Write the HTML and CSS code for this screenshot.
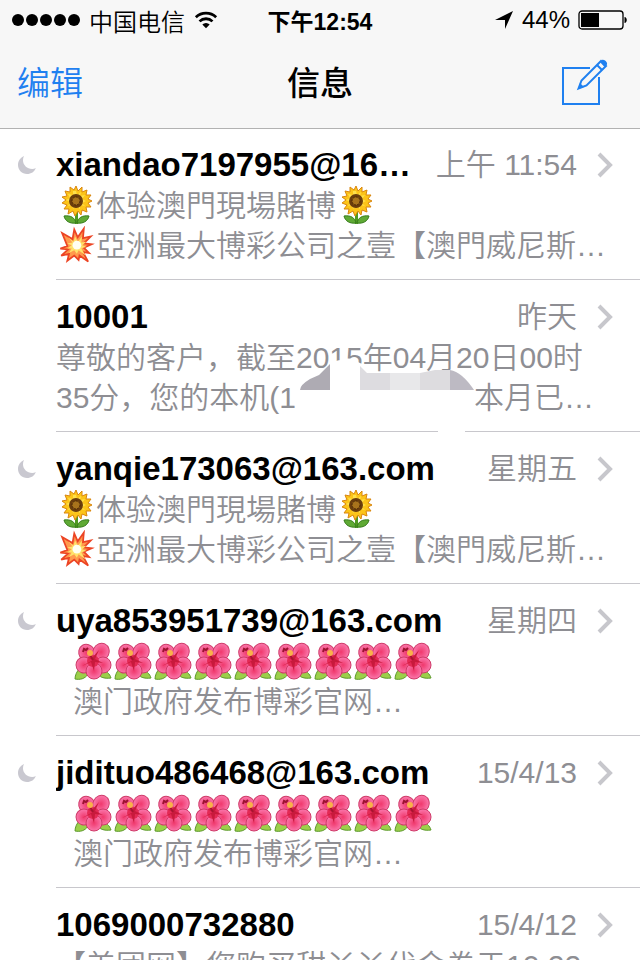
FILE: index.html
```html
<!DOCTYPE html>
<html lang="zh-CN">
<head>
    <meta charset="utf-8">
    <title>信息</title>
    <link rel="stylesheet" href="styles.css">
</head>
<body>

<svg class="defs" aria-hidden="true">
    <radialGradient id="petal">
        <stop offset="0" stop-color="#f0386c"/>
        <stop offset="1" stop-color="#fa78ac"/>
    </radialGradient>
    <symbol id="moon" viewBox="0 0 18 18">
        <path d="M6 0C2.500 1.500 0 5 0 9c0 5 4 9 9 9 4.200 0 7.600-2.300 8.800-6-1 .6-2.300.9-3.600.9C9.100 12.900 5 9 5 4.200 5 2.600 5.300 1.200 6 0z" fill="#c9c8d0"/>
    </symbol>
    <symbol id="chevron" viewBox="0 0 16 26">
        <path d="M2 2l11 11L2 24" fill="none" stroke="#c7c7cc" stroke-width="4"/>
    </symbol>
    <symbol id="sunflower" viewBox="0 0 40 40">
        <path d="M19 26h3v12h-3z" fill="#4f9a22"/>
        <path d="M20 37c-1-5-5-8-12-7 1 5 6 8 12 7zM21 37c1-5 5-8 12-7-1 5-6 8-12 7z" fill="#5faa35" stroke="#357a1b"/>
        <path d="M20 0l2 5 4-4 0 5 5-2-1 5 5 0-3 4 4 2-4 2 3 4-5 0 1 5-5-2-1 5-3-4-3 5-2-5-5 3 1-5-5 0 3-4-5-2 4-3-4-3 5-1-2-5 5 1 0-5 4 3z" fill="#fcc419" stroke="#d9860f"/>
        <path d="M20 5l1 4 4-3-1 4 5-1-3 4 4 2-4 2 3 3-5-1 0 4-4-3-3 3-1-4-4 1 2-4-4-2 4-2-2-4 5 1 0-4z" fill="#ffe04a"/>
        <circle cx="20" cy="15" r="7" fill="#6b3d0c"/>
        <circle cx="20" cy="15" r="4" fill="#a8731c" stroke="#4a2707" stroke-dasharray="2 1"/>
    </symbol>
    <symbol id="boom" viewBox="-3 -1 46 46">
        <path d="M4 7l12 7 2-11 4 9 7-10-1 11 9-2-8 8 9 1-9 4 6 6-7-1 6 11-10-7-1 5-5-5-8 6 2-8-9 2 8-7-9-1 8-3z" fill="#ff9a4d" stroke="#ec4424" stroke-width="2"/>
        <path d="M11 12l6 5 2-6 3 6 5-6-1 7 6-1-5 4 5 2-6 2 5 8-8-6-2 4-3-4-6 3 3-5-5 0 5-4-5-2 6-1z" fill="#ffe26a"/>
        <circle cx="21" cy="21" r="5" fill="#fffef0"/>
    </symbol>
    <symbol id="hibiscus" viewBox="0 0 40 40">
        <path d="M7 26c-3 3-5 7-5 11 5 1 10 0 13-5zM24 31c2 4 7 6 14 5-1-4-5-8-10-8z" fill="#9ccf4a" stroke="#5d9a2c"/>
        <g fill="url(#petal)" stroke="#cf3a68">
            <ellipse cx="14" cy="11" rx="8" ry="9" transform="rotate(-30 14 11)"/>
            <ellipse cx="28" cy="10" rx="8" ry="9" transform="rotate(25 28 10)"/>
            <ellipse cx="11" cy="23" rx="8" ry="8" transform="rotate(-25 11 23)"/>
            <ellipse cx="30" cy="23" rx="8" ry="8"/>
            <ellipse cx="21" cy="29" rx="8" ry="8"/>
        </g>
        <circle cx="20" cy="19" r="6" fill="#e42a55"/>
        <path d="M20 18l-6-3 5 1 7-8-4 9 8 4-8-1-1 9-3-9-9 4z" fill="#c81a3c"/>
        <path d="M20 18l-4-7" stroke="#a81530" stroke-width="2"/>
        <circle cx="17" cy="11" r="3" fill="#f9b04a"/>
        <path d="M10 10l1-3 2 1 2-2" fill="none" stroke="#9c1230" stroke-width="2"/>
    </symbol>
</svg>

<div class="screen">
    <header class="header">
        <div class="status">
            <div class="status-left">
                <svg class="signal" width="68" height="12" viewBox="0 0 68 12"><circle cx="6" cy="6" r="6"/><circle cx="20" cy="6" r="6"/><circle cx="34" cy="6" r="6"/><circle cx="48" cy="6" r="6"/><circle cx="62" cy="6" r="6"/></svg>
                <span>中国电信</span>
                <svg width="24" height="20" viewBox="0 0 26 20">
                    <path d="M2 7a16 16 0 0 1 22 0M6 11.500a10 10 0 0 1 14 0" fill="none" stroke="#000" stroke-width="3"/>
                    <path d="M13 19l-4-4a5.500 5.500 0 0 1 8 0z"/>
                </svg>
            </div>
            <div class="clock">下午12:54</div>
            <div class="status-right">
                <svg width="20" height="20" viewBox="0 0 20 20"><path d="M19 1L11 19v-9H1z"/></svg>
                <span>44%</span>
                <svg width="50" height="20" viewBox="0 0 50 20">
                    <rect x="1" y="1" width="44" height="18" rx="3" fill="none" stroke="#000" stroke-width="1.300"/>
                    <path d="M3 3h18v14H3zM46.500 7c3 0 3 6 0 6z"/>
                </svg>
            </div>
        </div>
        <div class="navbar">
            <button type="button" class="nav-button">编辑</button>
            <h1>信息</h1>
            <button type="button" class="nav-button compose" aria-label="新信息">
                <svg width="48" height="48" viewBox="0 0 48 48">
                    <g fill="none" stroke="#1f80f0" stroke-width="2">
                        <path d="M30 10H3v36h36V19"/>
                        <path d="M18.500 30.500l3-8L41 3l5 5-19.500 19.500z" fill="#f7f7f7"/>
                        <path d="M37 7l5 5"/>
                    </g>
                    <path d="M40 4l2-2c2-1.500 6 2.500 5 4.500l-2.500 2.500zM18 31l2-6 4 4z" fill="#1f80f0"/>
                </svg>
            </button>
        </div>
    </header>

    <main class="list">
        <a class="row" href="#">
            <span class="gutter"><svg class="moon"><use href="#moon"/></svg></span>
            <span class="message">
                <span class="top"><span class="name">xiandao7197955@16…</span><span class="time">上午 11:54</span><svg class="chevron"><use href="#chevron"/></svg></span>
                <span class="line"><svg class="emoji"><use href="#sunflower"/></svg>体验澳門現場賭博<svg class="emoji"><use href="#sunflower"/></svg></span>
                <span class="line"><svg class="emoji"><use href="#boom"/></svg>亞洲最大博彩公司之壹【澳門威尼斯…</span>
            </span>
        </a>
        <a class="row" href="#">
            <span class="gutter"></span>
            <span class="message">
                <span class="top"><span class="name">10001</span><span class="time">昨天</span><svg class="chevron"><use href="#chevron"/></svg></span>
                <span class="line">尊敬的客户，截至2015年04月20日00时</span>
                <span class="line">35分，您的本机(1<span class="erased"></span>本月已…</span>
                <svg class="smudge" width="180" height="76" viewBox="0 0 180 76">
                    <path d="M32 4q16-6 30 2l8 10 70-1 18 8 17 13v12H0V34l12-12z" fill="#fff"/>
                    <path d="M138 66h27v10h-27z" fill="#fff"/>
                    <path d="M0 32q0-5 10-11l9-4L30 6v26z" fill="#aeabb3"/>
                    <path d="M60 8l7 7h23v17H60z" fill="#dddce0"/>
                    <path d="M90 15h30v17H90z" fill="#e8e8ea"/>
                    <path d="M120 15l15-3h15v20h-30z" fill="#dddcdf"/>
                    <path d="M150 12q12 2 24 20h-24z" fill="#bdbac3"/>
                </svg>
            </span>
        </a>
        <a class="row" href="#">
            <span class="gutter"><svg class="moon"><use href="#moon"/></svg></span>
            <span class="message">
                <span class="top"><span class="name">yanqie173063@163.com</span><span class="time">星期五</span><svg class="chevron"><use href="#chevron"/></svg></span>
                <span class="line"><svg class="emoji"><use href="#sunflower"/></svg>体验澳門現場賭博<svg class="emoji"><use href="#sunflower"/></svg></span>
                <span class="line"><svg class="emoji"><use href="#boom"/></svg>亞洲最大博彩公司之壹【澳門威尼斯…</span>
            </span>
        </a>
        <a class="row" href="#">
            <span class="gutter"><svg class="moon"><use href="#moon"/></svg></span>
            <span class="message">
                <span class="top"><span class="name">uya853951739@163.com</span><span class="time">星期四</span><svg class="chevron"><use href="#chevron"/></svg></span>
                <span class="line indent"><svg class="emoji"><use href="#hibiscus"/></svg><svg class="emoji"><use href="#hibiscus"/></svg><svg class="emoji"><use href="#hibiscus"/></svg><svg class="emoji"><use href="#hibiscus"/></svg><svg class="emoji"><use href="#hibiscus"/></svg><svg class="emoji"><use href="#hibiscus"/></svg><svg class="emoji"><use href="#hibiscus"/></svg><svg class="emoji"><use href="#hibiscus"/></svg><svg class="emoji"><use href="#hibiscus"/></svg></span>
                <span class="line indent">澳门政府发布博彩官网…</span>
            </span>
        </a>
        <a class="row" href="#">
            <span class="gutter"><svg class="moon"><use href="#moon"/></svg></span>
            <span class="message">
                <span class="top"><span class="name">jidituo486468@163.com</span><span class="time">15/4/13</span><svg class="chevron"><use href="#chevron"/></svg></span>
                <span class="line indent"><svg class="emoji"><use href="#hibiscus"/></svg><svg class="emoji"><use href="#hibiscus"/></svg><svg class="emoji"><use href="#hibiscus"/></svg><svg class="emoji"><use href="#hibiscus"/></svg><svg class="emoji"><use href="#hibiscus"/></svg><svg class="emoji"><use href="#hibiscus"/></svg><svg class="emoji"><use href="#hibiscus"/></svg><svg class="emoji"><use href="#hibiscus"/></svg><svg class="emoji"><use href="#hibiscus"/></svg></span>
                <span class="line indent">澳门政府发布博彩官网…</span>
            </span>
        </a>
        <a class="row" href="#">
            <span class="gutter"></span>
            <span class="message">
                <span class="top"><span class="name">1069000732880</span><span class="time">15/4/12</span><svg class="chevron"><use href="#chevron"/></svg></span>
                <span class="line">【美团网】您购买甜丫丫代金券于10.22</span>
            </span>
        </a>
    </main>
</div>

</body>
</html>
```

FILE: styles.css
```css
* {
    box-sizing: border-box;
}
body {
    margin: 0;
    background: #fff;
    font-family: "Liberation Sans", "Noto Sans CJK SC", sans-serif;
}
.defs {
    position: absolute;
    width: 0;
    height: 0;
}
.screen {
    display: flex;
    flex-direction: column;
    height: 100vh;
    overflow: hidden;
}

/* status bar and title */
.header {
    flex: none;
    position: relative;
    background: #f7f7f7;
    box-shadow: 0 1px 0 #b2b2b2;
}
.status {
    display: grid;
    grid-template-columns: 1fr auto 1fr;
    align-items: center;
    height: 40px;
    padding: 0 12px;
    font-size: 24px;
    font-weight: 350;
}
.status-left, .status-right {
    display: flex;
    align-items: center;
    gap: 9px;
}
.status-right {
    justify-content: flex-end;
    gap: 8px;
}
.clock {
    font-size: 23px;
    font-weight: bold;
}
.navbar {
    display: grid;
    grid-template-columns: 1fr auto 1fr;
    align-items: center;
    height: 88px;
    padding: 0 17px;
}
.navbar h1 {
    margin: 0;
    font-size: 33px;
    font-weight: 500;
    line-height: 48px;
}
.nav-button {
    justify-self: start;
    padding: 0;
    border: none;
    background: none;
    color: #1f80f0;
    font-family: inherit;
    font-size: 33px;
    font-weight: 350;
    line-height: 48px;
    cursor: pointer;
}
.compose {
    justify-self: end;
    padding: 0 15px 4px 0;
}
.compose svg {
    display: block;
}

/* conversations */
.list {
    flex: 1;
    overflow: hidden;
}
.row {
    display: flex;
    color: inherit;
    text-decoration: none;
}
.gutter {
    flex: none;
    width: 56px;
    padding: 28px 0 0 18px;
}
.moon {
    display: block;
    width: 18px;
    height: 18px;
}
.message {
    flex: 1;
    min-width: 0;
    position: relative;
    height: 152px;
    padding-top: 16px;
    border-bottom: 1px solid #c8c7cc;
}
.top {
    display: flex;
    align-items: center;
    height: 42px;
    padding-right: 27px;
    line-height: 42px;
}
.name {
    flex: 1;
    min-width: 0;
    overflow: hidden;
    text-overflow: ellipsis;
    white-space: nowrap;
    color: #000;
    font-size: 33px;
    font-weight: bold;
}
.time {
    margin: 0 20px 0 16px;
    color: #8e8e93;
    font-size: 30px;
    font-weight: 350;
    white-space: nowrap;
}
.chevron {
    flex: none;
    width: 16px;
    height: 26px;
}
.line {
    display: block;
    height: 40px;
    overflow: hidden;
    color: #8e8e93;
    font-size: 30px;
    font-weight: 350;
    line-height: 40px;
    white-space: nowrap;
}
.indent {
    padding-left: 17px;
}
.emoji {
    width: 40px;
    height: 40px;
    vertical-align: top;
}
.erased {
    display: inline-block;
    width: 178px;
}
.smudge {
    position: absolute;
    top: 78px;
    left: 244px;
}
```
